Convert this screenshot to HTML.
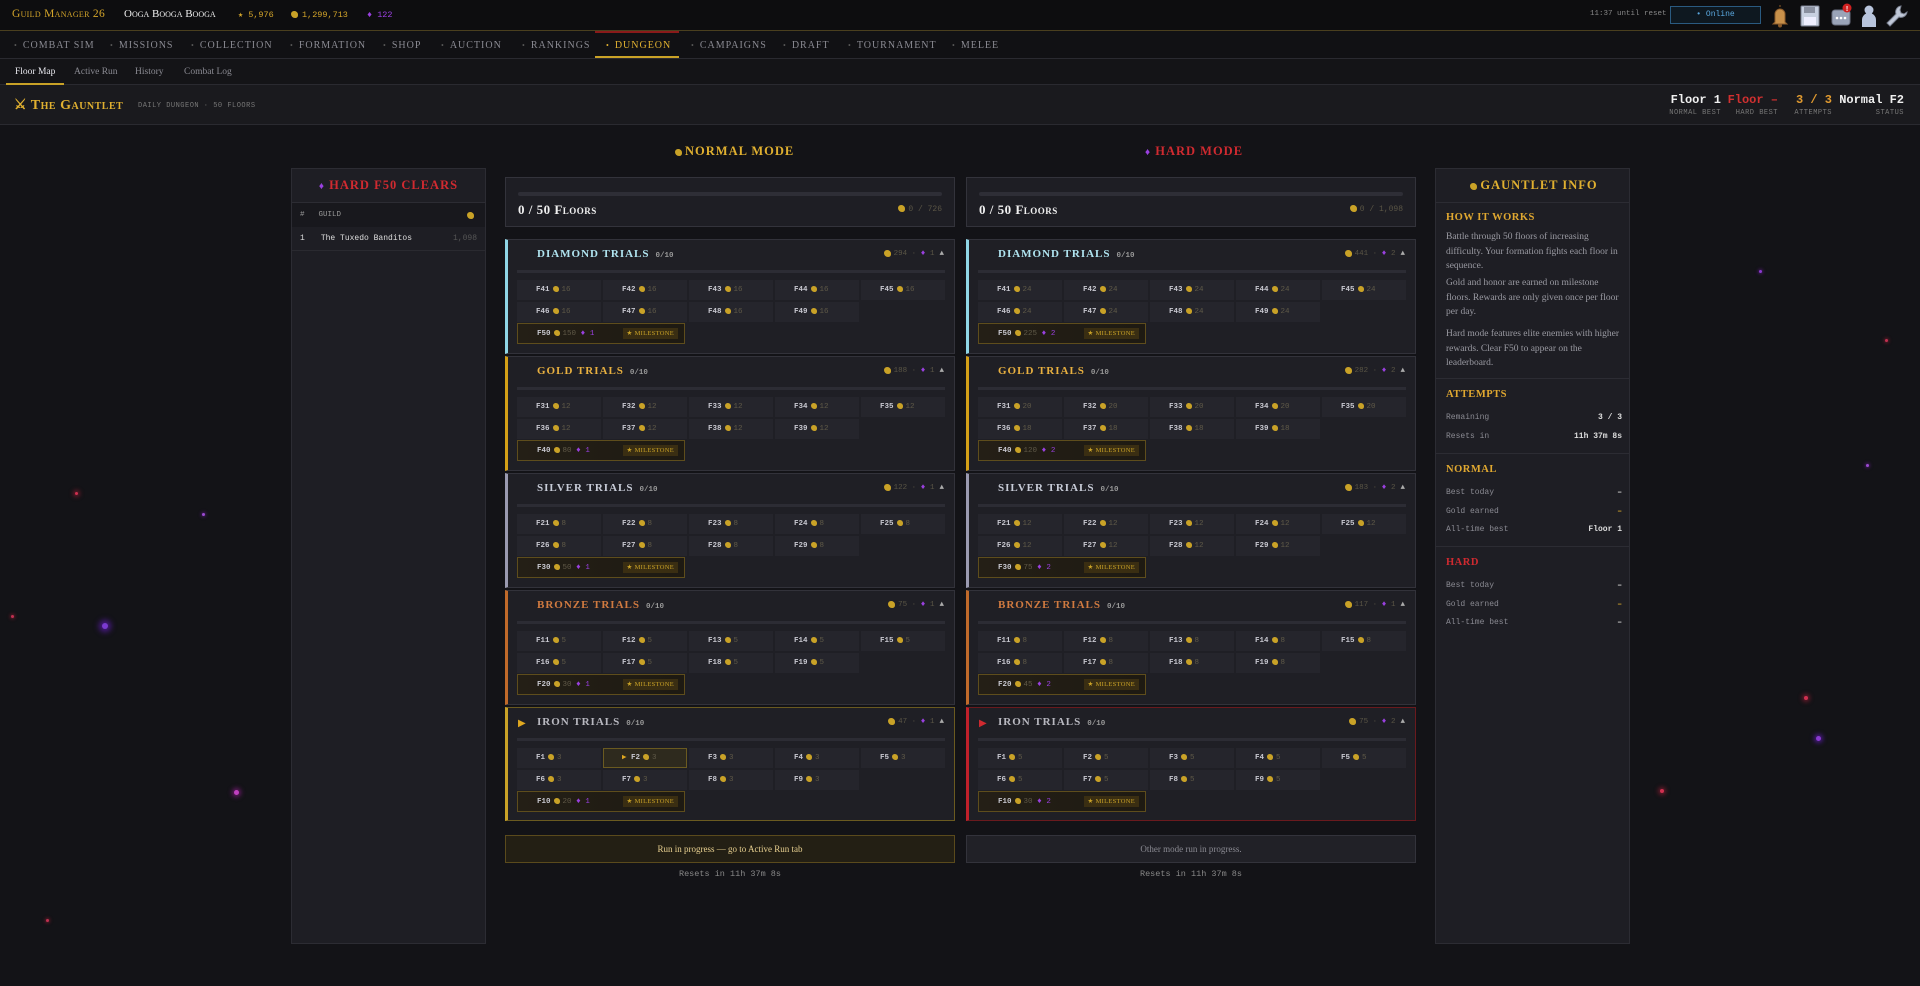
<!DOCTYPE html>
<html><head><meta charset="utf-8"><style>
*{box-sizing:border-box;margin:0;padding:0}
body{width:1920px;height:986px;background:#131317;position:relative;overflow:hidden;font-family:"Liberation Sans",sans-serif;color:#bbb}
.a{position:absolute}
.serif{font-family:"Liberation Serif",serif}
.mono{font-family:"Liberation Mono",monospace}
.c{display:inline-block;width:7px;height:7px;border-radius:45% 55% 40% 60%;background:#c9a227;vertical-align:middle;margin:0 3px}
.h{color:#9a40e0;font-size:8px}
#top{left:0;top:0;width:1920px;height:31px;background:#0d0d0f;border-bottom:1px solid #4a3f1e}
#nav{left:0;top:31px;width:1920px;height:28px;background:#111114;border-bottom:1px solid #2a2a30}
.ni{position:absolute;top:9px;font-family:"Liberation Serif",serif;font-size:10px;letter-spacing:1px;color:#8a8a92;white-space:nowrap}
.ni b{font-weight:normal;color:#555;margin-right:5px;font-size:8px}
#sub{left:0;top:59px;width:1920px;height:26px;background:#141417;border-bottom:1px solid #2a2a30}
.st{position:absolute;top:8px;font-family:"Liberation Serif",serif;font-size:9.5px;color:#8a8a92}
#hdr{left:0;top:85px;width:1920px;height:40px;background:#1a1a1e;border-bottom:1px solid #2a2a30}
.stv{position:absolute;top:8px;font-family:"Liberation Mono",monospace;font-size:12px;font-weight:bold;text-align:right}
.stl{position:absolute;top:24px;font-family:"Liberation Mono",monospace;font-size:7px;color:#777;letter-spacing:.5px;text-align:right}
.panel{position:absolute;background:#1e1e24;border:1px solid #2c2c33}
.mt{position:absolute;top:144px;font-family:"Liberation Serif",serif;font-weight:bold;font-size:12.5px;letter-spacing:1px}
.sum{position:absolute;top:177px;width:450px;height:50px;background:#1e1e24;border:1px solid #33333b}
.sum .bar{position:absolute;left:12px;right:12px;top:14px;height:4px;background:#2e2e36;border-radius:2px}
.sum .t{position:absolute;left:12px;top:24px;font-family:"Liberation Serif",serif;font-weight:bold;font-size:13px;color:#f0f0f0;font-variant:small-caps;letter-spacing:.5px}
.sum .r{position:absolute;right:12px;top:27px;font-family:"Liberation Mono",monospace;font-size:8px;color:#5a5545}
.sec{position:absolute;width:450px;height:115px;background:#1f1f25;border:1px solid #32323a;border-left:3px solid #888}
.sec .tt{position:absolute;left:29px;top:8px;font-family:"Liberation Serif",serif;font-weight:bold;font-size:11px;letter-spacing:1px;white-space:nowrap}
.sec .tt i{font-style:normal;font-family:"Liberation Mono",monospace;font-size:7.5px;color:#999;letter-spacing:0;margin-left:6px;font-weight:bold}
.sec .rw{position:absolute;right:10px;top:9px;font-family:"Liberation Mono",monospace;font-size:7.5px;color:#5a5545;white-space:nowrap}
.sec .rw .up{color:#aaa;margin-left:5px}
.sec .pb{position:absolute;left:9px;right:9px;top:30px;height:3px;background:#2c2c34}
.g{position:absolute;left:9px;right:9px;top:40px;display:grid;grid-template-columns:repeat(5,1fr);grid-auto-rows:20px;gap:2px}
.f{background:#25252c;font-family:"Liberation Mono",monospace;font-size:7.5px;line-height:20px;padding-left:19px;color:#605a48;white-space:nowrap}
.f b{color:#c8c8d0}
.f .c{width:6px;height:6px}
.ms{position:absolute;left:9px;top:83px;width:168px;height:21px;border:1px solid #5e4d1c;background:linear-gradient(90deg,#241f16,#1e1a12);font-family:"Liberation Mono",monospace;font-size:7.5px;line-height:19px;padding-left:19px;color:#605a48;white-space:nowrap}
.ms b{color:#c8c8d0}
.ms .c{width:6px;height:6px}
.ms .bd{position:absolute;right:6px;top:4px;height:11px;line-height:11px;padding:0 4px;background:#3a2e12;color:#c9a227;font-family:"Liberation Serif",serif;font-size:6.5px;letter-spacing:.3px}
.btn{position:absolute;top:835px;width:450px;height:28px;font-family:"Liberation Serif",serif;font-size:9px;text-align:center;line-height:26px}
.rs{position:absolute;top:869px;width:450px;text-align:center;font-family:"Liberation Mono",monospace;font-size:8.5px;color:#888}
.ih{font-family:"Liberation Serif",serif;font-weight:bold;font-size:10.5px;letter-spacing:.5px;position:absolute;left:10px}
.ip{position:absolute;left:10px;width:176px;font-family:"Liberation Serif",serif;font-size:9.5px;line-height:14.5px;color:#9a9aa2}
.kv{position:absolute;left:10px;width:176px;font-family:"Liberation Mono",monospace;font-size:8px;color:#8a8a92}
.kv span{float:right;color:#ddd;font-weight:bold}
.dv{position:absolute;left:0;width:194px;height:1px;background:#2c2c33}
.dot{position:absolute;border-radius:50%}
</style></head><body>
<div class="dot" style="left:102px;top:623px;width:6px;height:6px;background:#7a3ad0;box-shadow:0 0 6px 3px #4a1a8a"></div>
<div class="dot" style="left:75px;top:492px;width:3px;height:3px;background:#d03050;box-shadow:0 0 4px 2px #6a1a2a"></div>
<div class="dot" style="left:202px;top:513px;width:3px;height:3px;background:#9a4ad0;box-shadow:0 0 3px 1px #4a1a6a"></div>
<div class="dot" style="left:234px;top:790px;width:5px;height:5px;background:#c040c0;box-shadow:0 0 5px 2px #6a1a6a"></div>
<div class="dot" style="left:11px;top:615px;width:3px;height:3px;background:#c03050;box-shadow:0 0 3px 1px #6a1a2a"></div>
<div class="dot" style="left:46px;top:919px;width:3px;height:3px;background:#c03050;box-shadow:0 0 3px 1px #6a1a2a"></div>
<div class="dot" style="left:1804px;top:696px;width:4px;height:4px;background:#d03050;box-shadow:0 0 4px 2px #6a1a2a"></div>
<div class="dot" style="left:1816px;top:736px;width:5px;height:5px;background:#8a3ad0;box-shadow:0 0 5px 2px #4a1a8a"></div>
<div class="dot" style="left:1866px;top:464px;width:3px;height:3px;background:#9a4ad0;box-shadow:0 0 3px 1px #4a1a6a"></div>
<div class="dot" style="left:1660px;top:789px;width:4px;height:4px;background:#d03050;box-shadow:0 0 4px 2px #6a1a2a"></div>
<div class="dot" style="left:1885px;top:339px;width:3px;height:3px;background:#c03050;box-shadow:0 0 3px 1px #6a1a2a"></div>
<div class="dot" style="left:1759px;top:270px;width:3px;height:3px;background:#8a3ad0;box-shadow:0 0 3px 1px #4a1a6a"></div>

<div id="top" class="a">
 <div class="a serif" style="left:12px;top:8px;font-size:11.5px;color:#d4a52a;font-variant:small-caps;letter-spacing:.3px">Guild Manager 26</div>
 <div class="a serif" style="left:124px;top:8px;font-size:11px;color:#eee;font-variant:small-caps">Ooga Booga Booga</div>
 <div class="a mono" style="left:238px;top:10px;font-size:8.5px;color:#d4a52a">★ 5,976</div>
 <div class="a mono" style="left:291px;top:10px;font-size:8.5px;color:#d4a52a"><span class="c" style="margin:0 4px 0 0"></span>1,299,713</div>
 <div class="a mono" style="left:367px;top:10px;font-size:8.5px;color:#9a40e0">♦ 122</div>
 <div class="a mono" style="left:1590px;top:10px;font-size:7.5px;color:#888">11:37 until reset</div>
 <div class="a mono" style="left:1670px;top:6px;width:91px;height:18px;border:1px solid #2a5a80;background:#0e1820;color:#5aa8e0;font-size:8px;text-align:center;line-height:16px">• Online</div>
 <svg class="a" style="left:1769px;top:4px" width="22" height="24" viewBox="0 0 22 24"><path d="M11 1v2M6 18V10a5 5 0 0 1 10 0v8l2 2H4z" fill="#c8904a" stroke="#8a5a2a"/><circle cx="11" cy="21.5" r="2" fill="#8a5a2a"/></svg>
 <svg class="a" style="left:1800px;top:5px" width="20" height="22" viewBox="0 0 20 22"><rect x="1" y="1" width="18" height="20" rx="1" fill="#c8d0e0" stroke="#7a8090"/><rect x="4" y="2" width="11" height="6" fill="#8a90a0"/><rect x="4" y="12" width="12" height="8" fill="#eef"/></svg>
 <svg class="a" style="left:1830px;top:3px" width="24" height="26" viewBox="0 0 24 26"><rect x="2" y="7" width="18" height="15" rx="3" fill="#9aa4b8" stroke="#6a7080"/><circle cx="7" cy="15" r="1.3" fill="#fff"/><circle cx="11" cy="15" r="1.3" fill="#fff"/><circle cx="15" cy="15" r="1.3" fill="#fff"/><circle cx="17" cy="5" r="4.5" fill="#d02020"/><text x="17" y="8" font-size="7" fill="#fff" text-anchor="middle" font-family="Liberation Sans" font-weight="bold">!</text></svg>
 <svg class="a" style="left:1859px;top:4px" width="20" height="24" viewBox="0 0 20 24"><circle cx="10" cy="6" r="4.5" fill="#b8c4dc"/><path d="M3 23v-7a7 7 0 0 1 14 0v7z" fill="#b8c4dc"/></svg>
 <svg class="a" style="left:1885px;top:4px" width="24" height="24" viewBox="0 0 24 24"><path d="M16 2a6 6 0 0 0-5 8L2 19l3 3 9-9a6 6 0 0 0 8-5l-3 2-3-1-1-3z" fill="#c0c8d8" stroke="#7a8090"/></svg>
</div>

<div id="nav" class="a">
 <div class="a" style="left:595px;top:0;width:84px;height:2px;background:#8a1a1a"></div>
 <div class="a" style="left:595px;top:25px;width:84px;height:2px;background:#c9a227"></div>
 <div class="ni" style="left:14px"><b>•</b>COMBAT SIM</div>
 <div class="ni" style="left:110px"><b>•</b>MISSIONS</div>
 <div class="ni" style="left:191px"><b>•</b>COLLECTION</div>
 <div class="ni" style="left:290px"><b>•</b>FORMATION</div>
 <div class="ni" style="left:383px"><b>•</b>SHOP</div>
 <div class="ni" style="left:441px"><b>•</b>AUCTION</div>
 <div class="ni" style="left:522px"><b>•</b>RANKINGS</div>
 <div class="ni" style="left:606px;color:#e0b030"><b style="color:#e0b030">•</b>DUNGEON</div>
 <div class="ni" style="left:691px"><b>•</b>CAMPAIGNS</div>
 <div class="ni" style="left:783px"><b>•</b>DRAFT</div>
 <div class="ni" style="left:848px"><b>•</b>TOURNAMENT</div>
 <div class="ni" style="left:952px"><b>•</b>MELEE</div>
</div>

<div id="sub" class="a">
 <div class="st" style="left:15px;color:#e8e8ee">Floor Map</div>
 <div class="a" style="left:6px;top:24px;width:58px;height:2px;background:#c9a227"></div>
 <div class="st" style="left:74px">Active Run</div>
 <div class="st" style="left:135px">History</div>
 <div class="st" style="left:184px">Combat Log</div>
</div>

<div id="hdr" class="a">
 <div class="a serif" style="left:14px;top:12px;font-size:14px;font-weight:bold;color:#e0b030;font-variant:small-caps;letter-spacing:.5px">⚔ The Gauntlet</div>
 <div class="a mono" style="left:138px;top:17px;font-size:7px;color:#777;letter-spacing:.5px">DAILY DUNGEON · 50 FLOORS</div>
 <div class="stv" style="right:199px;color:#f0f0f0">Floor 1</div><div class="stl" style="right:199px">NORMAL BEST</div>
 <div class="stv" style="right:142px;color:#d03030">Floor –</div><div class="stl" style="right:142px">HARD BEST</div>
 <div class="stv" style="right:88px;color:#e09a30">3 / 3</div><div class="stl" style="right:88px">ATTEMPTS</div>
 <div class="stv" style="right:16px;color:#f0f0f0">Normal F2</div><div class="stl" style="right:16px">STATUS</div>
</div>

<div class="panel" style="left:291px;top:168px;width:195px;height:776px">
 <div class="a serif" style="left:0;width:193px;top:9px;text-align:center;font-weight:bold;font-size:12.5px;letter-spacing:1px;color:#d02a30"><span class="h" style="font-size:10px">♦</span> HARD F50 CLEARS</div>
 <div class="a" style="left:0;top:33px;width:193px;height:1px;background:#2c2c33"></div>
 <div class="a mono" style="left:0;top:34px;width:193px;height:24px;background:#18181d;font-size:7.5px;color:#999;line-height:24px"><span style="margin-left:8px">#</span><span style="margin-left:14px">GUILD</span><span class="c" style="position:absolute;right:8px;top:9px"></span></div>
 <div class="a mono" style="left:0;top:58px;width:193px;height:24px;border-bottom:1px solid #2a2a30;font-size:8px;color:#ddd;line-height:24px"><span style="margin-left:8px">1</span><span style="margin-left:16px">The Tuxedo Banditos</span><span style="position:absolute;right:8px;color:#555">1,098</span></div>
</div>

<div class="mt" style="left:672px;color:#e0b030"><span class="c"></span>NORMAL MODE</div>
<div class="mt" style="left:1145px;color:#d02a30"><span class="h" style="font-size:10px">♦</span> HARD MODE</div>

<div class="sum" style="left:505px"><div class="bar"></div><div class="t">0 / 50 Floors</div><div class="r"><span class="c"></span>0 / 726</div></div>
<div class="sum" style="left:966px"><div class="bar"></div><div class="t">0 / 50 Floors</div><div class="r"><span class="c"></span>0 / 1,098</div></div>

<div class="sec" style="left:505px;top:239px;border-left-color:#8fd6e6">
 <div class="tt" style="color:#b0e4f0">DIAMOND TRIALS<i>0/10</i></div>
 <div class="rw"><span class="c"></span>294 · <span class="h">♦</span> 1<span class="up">▲</span></div><div class="pb"></div>
 <div class="g"><div class="f"><b>F41</b><span class="c"></span>16</div><div class="f"><b>F42</b><span class="c"></span>16</div><div class="f"><b>F43</b><span class="c"></span>16</div><div class="f"><b>F44</b><span class="c"></span>16</div><div class="f"><b>F45</b><span class="c"></span>16</div><div class="f"><b>F46</b><span class="c"></span>16</div><div class="f"><b>F47</b><span class="c"></span>16</div><div class="f"><b>F48</b><span class="c"></span>16</div><div class="f"><b>F49</b><span class="c"></span>16</div></div>
 <div class="ms"><b>F50</b><span class="c"></span>150 <span class="h">♦</span> <span style="color:#9a40e0">1</span><span class="bd">★ MILESTONE</span></div>
</div>
<div class="sec" style="left:505px;top:356px;border-left-color:#d4a017">
 <div class="tt" style="color:#e8b040">GOLD TRIALS<i>0/10</i></div>
 <div class="rw"><span class="c"></span>188 · <span class="h">♦</span> 1<span class="up">▲</span></div><div class="pb"></div>
 <div class="g"><div class="f"><b>F31</b><span class="c"></span>12</div><div class="f"><b>F32</b><span class="c"></span>12</div><div class="f"><b>F33</b><span class="c"></span>12</div><div class="f"><b>F34</b><span class="c"></span>12</div><div class="f"><b>F35</b><span class="c"></span>12</div><div class="f"><b>F36</b><span class="c"></span>12</div><div class="f"><b>F37</b><span class="c"></span>12</div><div class="f"><b>F38</b><span class="c"></span>12</div><div class="f"><b>F39</b><span class="c"></span>12</div></div>
 <div class="ms"><b>F40</b><span class="c"></span>80 <span class="h">♦</span> <span style="color:#9a40e0">1</span><span class="bd">★ MILESTONE</span></div>
</div>
<div class="sec" style="left:505px;top:473px;border-left-color:#9a9ab0">
 <div class="tt" style="color:#c8ccd8">SILVER TRIALS<i>0/10</i></div>
 <div class="rw"><span class="c"></span>122 · <span class="h">♦</span> 1<span class="up">▲</span></div><div class="pb"></div>
 <div class="g"><div class="f"><b>F21</b><span class="c"></span>8</div><div class="f"><b>F22</b><span class="c"></span>8</div><div class="f"><b>F23</b><span class="c"></span>8</div><div class="f"><b>F24</b><span class="c"></span>8</div><div class="f"><b>F25</b><span class="c"></span>8</div><div class="f"><b>F26</b><span class="c"></span>8</div><div class="f"><b>F27</b><span class="c"></span>8</div><div class="f"><b>F28</b><span class="c"></span>8</div><div class="f"><b>F29</b><span class="c"></span>8</div></div>
 <div class="ms"><b>F30</b><span class="c"></span>50 <span class="h">♦</span> <span style="color:#9a40e0">1</span><span class="bd">★ MILESTONE</span></div>
</div>
<div class="sec" style="left:505px;top:590px;border-left-color:#c06a2a">
 <div class="tt" style="color:#d07a40">BRONZE TRIALS<i>0/10</i></div>
 <div class="rw"><span class="c"></span>75 · <span class="h">♦</span> 1<span class="up">▲</span></div><div class="pb"></div>
 <div class="g"><div class="f"><b>F11</b><span class="c"></span>5</div><div class="f"><b>F12</b><span class="c"></span>5</div><div class="f"><b>F13</b><span class="c"></span>5</div><div class="f"><b>F14</b><span class="c"></span>5</div><div class="f"><b>F15</b><span class="c"></span>5</div><div class="f"><b>F16</b><span class="c"></span>5</div><div class="f"><b>F17</b><span class="c"></span>5</div><div class="f"><b>F18</b><span class="c"></span>5</div><div class="f"><b>F19</b><span class="c"></span>5</div></div>
 <div class="ms"><b>F20</b><span class="c"></span>30 <span class="h">♦</span> <span style="color:#9a40e0">1</span><span class="bd">★ MILESTONE</span></div>
</div>
<div class="sec" style="left:505px;top:707px;height:114px;border:1px solid #6a5a20;border-left:3px solid #c9a227">
 <div class="a" style="left:10px;top:10px;color:#e0a820;font-size:10px">▶</div>
 <div class="tt" style="color:#b8b8c0">IRON TRIALS<i>0/10</i></div>
 <div class="rw"><span class="c"></span>47 · <span class="h">♦</span> 1<span class="up">▲</span></div><div class="pb"></div>
 <div class="g"><div class="f"><b>F1</b><span class="c"></span>3</div><div class="f" style="background:#2e2a1e;outline:1px solid #6a5a20;outline-offset:-1px"><b><span style="color:#e0a820">▶</span> F2</b><span class="c"></span>3</div><div class="f"><b>F3</b><span class="c"></span>3</div><div class="f"><b>F4</b><span class="c"></span>3</div><div class="f"><b>F5</b><span class="c"></span>3</div><div class="f"><b>F6</b><span class="c"></span>3</div><div class="f"><b>F7</b><span class="c"></span>3</div><div class="f"><b>F8</b><span class="c"></span>3</div><div class="f"><b>F9</b><span class="c"></span>3</div></div>
 <div class="ms"><b>F10</b><span class="c"></span>20 <span class="h">♦</span> <span style="color:#9a40e0">1</span><span class="bd">★ MILESTONE</span></div>
</div>

<div class="sec" style="left:966px;top:239px;border-left-color:#8fd6e6">
 <div class="tt" style="color:#b0e4f0">DIAMOND TRIALS<i>0/10</i></div>
 <div class="rw"><span class="c"></span>441 · <span class="h">♦</span> 2<span class="up">▲</span></div><div class="pb"></div>
 <div class="g"><div class="f"><b>F41</b><span class="c"></span>24</div><div class="f"><b>F42</b><span class="c"></span>24</div><div class="f"><b>F43</b><span class="c"></span>24</div><div class="f"><b>F44</b><span class="c"></span>24</div><div class="f"><b>F45</b><span class="c"></span>24</div><div class="f"><b>F46</b><span class="c"></span>24</div><div class="f"><b>F47</b><span class="c"></span>24</div><div class="f"><b>F48</b><span class="c"></span>24</div><div class="f"><b>F49</b><span class="c"></span>24</div></div>
 <div class="ms"><b>F50</b><span class="c"></span>225 <span class="h">♦</span> <span style="color:#9a40e0">2</span><span class="bd">★ MILESTONE</span></div>
</div>
<div class="sec" style="left:966px;top:356px;border-left-color:#d4a017">
 <div class="tt" style="color:#e8b040">GOLD TRIALS<i>0/10</i></div>
 <div class="rw"><span class="c"></span>282 · <span class="h">♦</span> 2<span class="up">▲</span></div><div class="pb"></div>
 <div class="g"><div class="f"><b>F31</b><span class="c"></span>20</div><div class="f"><b>F32</b><span class="c"></span>20</div><div class="f"><b>F33</b><span class="c"></span>20</div><div class="f"><b>F34</b><span class="c"></span>20</div><div class="f"><b>F35</b><span class="c"></span>20</div><div class="f"><b>F36</b><span class="c"></span>18</div><div class="f"><b>F37</b><span class="c"></span>18</div><div class="f"><b>F38</b><span class="c"></span>18</div><div class="f"><b>F39</b><span class="c"></span>18</div></div>
 <div class="ms"><b>F40</b><span class="c"></span>120 <span class="h">♦</span> <span style="color:#9a40e0">2</span><span class="bd">★ MILESTONE</span></div>
</div>
<div class="sec" style="left:966px;top:473px;border-left-color:#9a9ab0">
 <div class="tt" style="color:#c8ccd8">SILVER TRIALS<i>0/10</i></div>
 <div class="rw"><span class="c"></span>183 · <span class="h">♦</span> 2<span class="up">▲</span></div><div class="pb"></div>
 <div class="g"><div class="f"><b>F21</b><span class="c"></span>12</div><div class="f"><b>F22</b><span class="c"></span>12</div><div class="f"><b>F23</b><span class="c"></span>12</div><div class="f"><b>F24</b><span class="c"></span>12</div><div class="f"><b>F25</b><span class="c"></span>12</div><div class="f"><b>F26</b><span class="c"></span>12</div><div class="f"><b>F27</b><span class="c"></span>12</div><div class="f"><b>F28</b><span class="c"></span>12</div><div class="f"><b>F29</b><span class="c"></span>12</div></div>
 <div class="ms"><b>F30</b><span class="c"></span>75 <span class="h">♦</span> <span style="color:#9a40e0">2</span><span class="bd">★ MILESTONE</span></div>
</div>
<div class="sec" style="left:966px;top:590px;border-left-color:#c06a2a">
 <div class="tt" style="color:#d07a40">BRONZE TRIALS<i>0/10</i></div>
 <div class="rw"><span class="c"></span>117 · <span class="h">♦</span> 1<span class="up">▲</span></div><div class="pb"></div>
 <div class="g"><div class="f"><b>F11</b><span class="c"></span>8</div><div class="f"><b>F12</b><span class="c"></span>8</div><div class="f"><b>F13</b><span class="c"></span>8</div><div class="f"><b>F14</b><span class="c"></span>8</div><div class="f"><b>F15</b><span class="c"></span>8</div><div class="f"><b>F16</b><span class="c"></span>8</div><div class="f"><b>F17</b><span class="c"></span>8</div><div class="f"><b>F18</b><span class="c"></span>8</div><div class="f"><b>F19</b><span class="c"></span>8</div></div>
 <div class="ms"><b>F20</b><span class="c"></span>45 <span class="h">♦</span> <span style="color:#9a40e0">2</span><span class="bd">★ MILESTONE</span></div>
</div>
<div class="sec" style="left:966px;top:707px;height:114px;border:1px solid #6a1a1e;border-left:3px solid #c0202a">
 <div class="a" style="left:10px;top:10px;color:#d02a30;font-size:10px">▶</div>
 <div class="tt" style="color:#b8b8c0">IRON TRIALS<i>0/10</i></div>
 <div class="rw"><span class="c"></span>75 · <span class="h">♦</span> 2<span class="up">▲</span></div><div class="pb"></div>
 <div class="g"><div class="f"><b>F1</b><span class="c"></span>5</div><div class="f"><b>F2</b><span class="c"></span>5</div><div class="f"><b>F3</b><span class="c"></span>5</div><div class="f"><b>F4</b><span class="c"></span>5</div><div class="f"><b>F5</b><span class="c"></span>5</div><div class="f"><b>F6</b><span class="c"></span>5</div><div class="f"><b>F7</b><span class="c"></span>5</div><div class="f"><b>F8</b><span class="c"></span>5</div><div class="f"><b>F9</b><span class="c"></span>5</div></div>
 <div class="ms"><b>F10</b><span class="c"></span>30 <span class="h">♦</span> <span style="color:#9a40e0">2</span><span class="bd">★ MILESTONE</span></div>
</div>

<div class="btn" style="left:505px;background:#231f14;border:1px solid #5a4a1c;color:#e8d090">Run in progress — go to Active Run tab</div>
<div class="btn" style="left:966px;background:#212127;border:1px solid #33333b;color:#8a8a92">Other mode run in progress.</div>
<div class="rs" style="left:505px">Resets in 11h 37m 8s</div>
<div class="rs" style="left:966px">Resets in 11h 37m 8s</div>

<div class="panel" style="left:1435px;top:168px;width:195px;height:776px">
 <div class="a serif" style="left:0;width:193px;top:9px;text-align:center;font-weight:bold;font-size:12.5px;letter-spacing:1px;color:#e0b030"><span class="c"></span>GAUNTLET INFO</div>
 <div class="a" style="left:0;top:33px;width:193px;height:1px;background:#2c2c33"></div>
 <div class="ih" style="top:43px;color:#e0a830">HOW IT WORKS</div>
 <div class="ip" style="top:61px">Battle through 50 floors of increasing difficulty. Your formation fights each floor in sequence.</div>
 <div class="ip" style="top:107px">Gold and honor are earned on milestone floors. Rewards are only given once per floor per day.</div>
 <div class="ip" style="top:158px">Hard mode features elite enemies with higher rewards. Clear F50 to appear on the leaderboard.</div>
 <div class="dv" style="top:209px"></div>
 <div class="ih" style="top:220px;color:#e0a830">ATTEMPTS</div>
 <div class="kv" style="top:244px">Remaining<span>3 / 3</span></div>
 <div class="kv" style="top:263px">Resets in<span>11h 37m 8s</span></div>
 <div class="dv" style="top:284px"></div>
 <div class="ih" style="top:295px;color:#e0a830">NORMAL</div>
 <div class="kv" style="top:319px">Best today<span>–</span></div>
 <div class="kv" style="top:338px">Gold earned<span style="color:#d4a52a">–</span></div>
 <div class="kv" style="top:356px">All-time best<span>Floor 1</span></div>
 <div class="dv" style="top:377px"></div>
 <div class="ih" style="top:388px;color:#d02a30">HARD</div>
 <div class="kv" style="top:412px">Best today<span>–</span></div>
 <div class="kv" style="top:431px">Gold earned<span style="color:#d4a52a">–</span></div>
 <div class="kv" style="top:449px">All-time best<span>–</span></div>
</div>
</body></html>
